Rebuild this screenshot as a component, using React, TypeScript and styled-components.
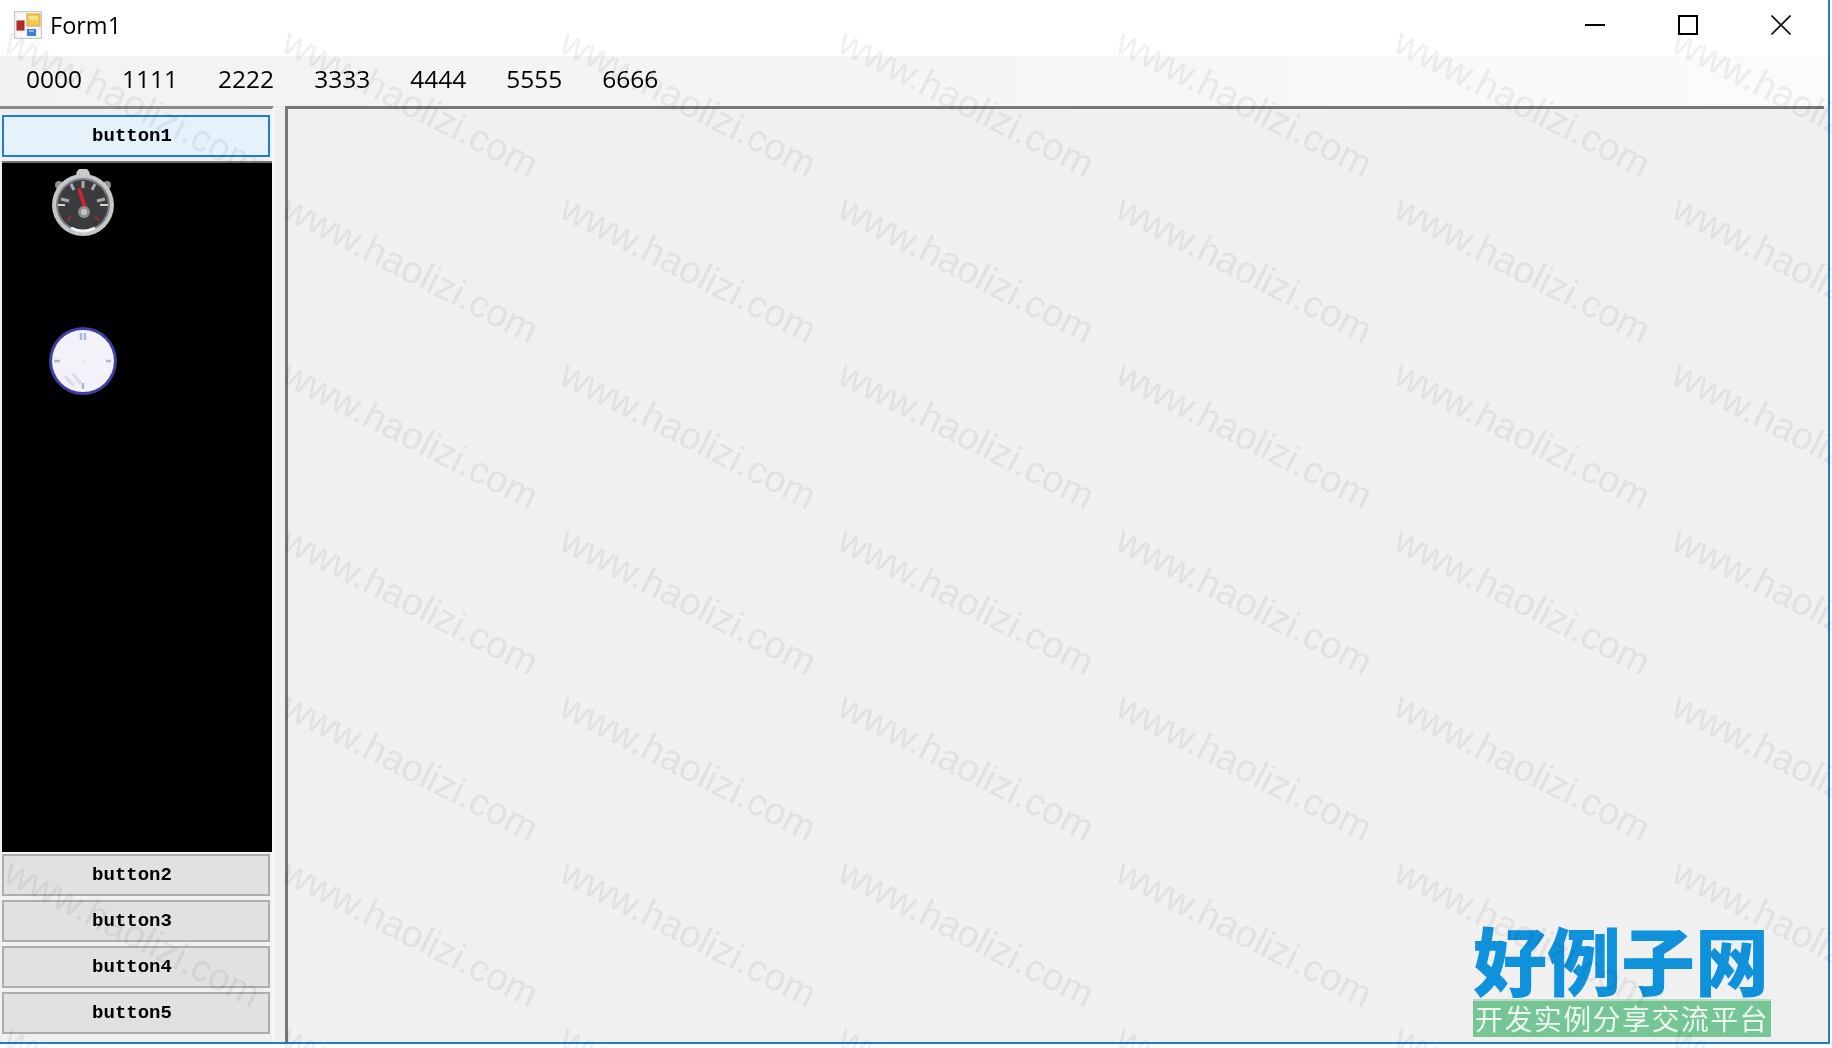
import * as React from "react";
import styled, { createGlobalStyle } from "styled-components";

const MENU_ITEMS = ["0000", "1111", "2222", "3333", "4444", "5555", "6666"];
const LOWER_BUTTONS = ["button2", "button3", "button4", "button5"];
const WATERMARK_COUNT = 7 * 7;

const GlobalStyle = createGlobalStyle`
  html, body {
    margin: 0;
    padding: 0;
    background: #fff;
  }
  * {
    box-sizing: border-box;
  }
`;

const Page = styled.div`
  position: relative;
  width: 1832px;
  height: 1048px;
  background: #fff;
  overflow: hidden;
`;

const Window = styled.div`
  width: 1830px;
  height: 1044px;
  display: grid;
  grid-template-rows: 56px 50px 1fr;
  border-right: 2px solid #1a7fd0;
  border-bottom: 2px solid #1a7fd0;
  background: #f0f0f0;
`;

const TitleBar = styled.header`
  display: flex;
  align-items: center;
  padding: 0 37px 6px 14px;
  background: #fff;
`;

const TitleText = styled.span`
  margin-left: 8px;
  flex: 1;
  font-family: "Open Sans", sans-serif;
  font-size: 23.5px;
  color: #000;
`;

const WindowControls = styled.div`
  display: flex;
  gap: 73px;
`;

const MenuBar = styled.nav`
  display: flex;
  align-items: center;
  padding: 0 0 4px 6px;
  background: linear-gradient(90deg, #f2f2f2 0%, #f5f5f5 50%, #fbfbfb 100%);
`;

const MenuItem = styled.span`
  padding: 0 20px;
  font-family: "Open Sans", sans-serif;
  font-size: 24.5px;
  line-height: 34px;
  color: #000;
`;

const Body = styled.div`
  display: grid;
  grid-template-columns: 274px 1fr;
  column-gap: 10px;
  min-height: 0;
  padding-right: 4px;
`;

const LeftPanel = styled.aside`
  display: flex;
  flex-direction: column;
  padding: 6px 2px 4px 2px;
  border-top: 3px solid #8a8a8a;
  border-right: 2px solid #f7f7f7;
  background: #f0f0f0;
`;

const NavButton = styled.button<{ $active?: boolean }>`
  flex: none;
  width: 268px;
  height: 42px;
  margin-bottom: 4px;
  padding: 0 8px 0 0;
  border: 2px solid ${({ $active }) => ($active ? "#1a7fd0" : "#adadad")};
  border-radius: 0;
  background: ${({ $active }) => ($active ? "#e5f1fb" : "#e1e1e1")};
  font-family: "Liberation Mono", monospace;
  font-size: 19px;
  font-weight: 700;
  color: #000;
`;

const GaugeList = styled.div`
  flex: 1;
  display: flex;
  flex-direction: column;
  width: 270px;
  margin-bottom: 2px;
  padding: 6px 0 0 47px;
  border-top: 2px solid #6f7378;
  background: #000;
`;

const GaugeImage = styled.svg`
  display: block;
  filter: blur(0.6px);
`;

const ClockImage = styled(GaugeImage)`
  margin-top: 89px;
  margin-left: -1px;
`;

const MainPanel = styled.main`
  display: flex;
  flex-direction: column;
  align-items: flex-end;
  justify-content: flex-end;
  margin-left: 1px;
  padding: 0 53px 5px 0;
  border-top: 3px solid #777;
  border-left: 3px solid #777;
  background: #f0f0f0;
`;

const LogoTitle = styled.div`
  width: 298px;
  font-family: "Noto Sans CJK SC", sans-serif;
  font-size: 74px;
  font-weight: 900;
  line-height: 76px;
  letter-spacing: 0;
  white-space: nowrap;
  color: #0f91dc;
`;

const LogoSlogan = styled.div`
  width: 298px;
  height: 38px;
  margin-top: 3px;
  border-top: 2px solid #b6dcc4;
  background: #76c594;
  font-family: "Noto Sans CJK SC", sans-serif;
  font-size: 28px;
  line-height: 35px;
  letter-spacing: 1.4px;
  text-align: center;
  white-space: nowrap;
  color: #eef8f1;
`;

const WatermarkLayer = styled.div`
  position: absolute;
  inset: 0;
  display: grid;
  grid-template-columns: repeat(7, 278px);
  grid-auto-rows: 166px;
  padding: 18px 0 0 12px;
  overflow: hidden;
  pointer-events: none;
  mix-blend-mode: multiply;
`;

const WatermarkText = styled.span`
  display: block;
  width: 0;
  height: 0;
  white-space: nowrap;
  transform: rotate(27deg);
  transform-origin: 0 12px;
  font-family: "Liberation Sans", sans-serif;
  font-size: 38px;
  line-height: 44px;
  color: #f0f0f0;
`;

const FormIcon = () => (
  <svg width="28" height="28" viewBox="0 0 28 28">
    <rect x="0.5" y="0.5" width="27" height="27" fill="#f1f1f1" stroke="#c6c6c6" />
    <rect x="3" y="3" width="4" height="5" fill="#fff" />
    <rect x="8" y="3" width="4" height="5" fill="#fff" />
    <rect x="3" y="22" width="4" height="3" fill="#fff" />
    <rect x="8" y="22" width="4" height="3" fill="#fff" />
    <rect x="23" y="19" width="3" height="6" fill="#fff" />
    <rect x="13" y="3" width="13" height="12" fill="#f6c84a" stroke="#d9a441" />
    <rect x="15" y="5" width="9" height="4" fill="#fbe08c" />
    <rect x="3" y="10" width="7" height="9" fill="#b92b2b" stroke="#9c2a2a" />
    <rect x="13" y="18" width="9" height="7" fill="#3f7fd8" />
    <rect x="15" y="19" width="5" height="2" fill="#8db6ee" />
  </svg>
);

const MinimizeIcon = () => (
  <svg width="20" height="20" viewBox="0 0 20 20">
    <rect x="0" y="9" width="20" height="2" fill="#000" />
  </svg>
);

const MaximizeIcon = () => (
  <svg width="20" height="20" viewBox="0 0 20 20">
    <rect x="1" y="1" width="18" height="18" fill="none" stroke="#000" strokeWidth="2" />
  </svg>
);

const CloseIcon = () => (
  <svg width="20" height="20" viewBox="0 0 20 20">
    <path d="M0.5 0.5 L19.5 19.5 M19.5 0.5 L0.5 19.5" stroke="#111" strokeWidth="1.6" />
  </svg>
);

const Gauge = () => (
  <GaugeImage width="68" height="68" viewBox="0 0 68 68">
    <circle cx="34" cy="6" r="7" fill="#c9cdd0" />
    <circle cx="10" cy="16" r="4" fill="#8d9194" />
    <circle cx="58" cy="16" r="4" fill="#8d9194" />
    <circle cx="34" cy="36" r="31" fill="#c4c8ca" />
    <circle cx="34" cy="36" r="27" fill="#7d8184" />
    <circle cx="34" cy="36" r="25" fill="#3a3b3c" />
    <path d="M12 30 L20 32 M56 30 L48 32 M22 15 L25 21 M46 15 L43 21 M34 12 L34 19" stroke="#a9adb0" strokeWidth="3" />
    <path d="M9 36 L16 36 M59 36 L51 36" stroke="#d2d4d5" strokeWidth="2" />
    <path d="M18 52 L22 47 M50 52 L46 47" stroke="#a82a2a" strokeWidth="2" />
    <path d="M28 19 L32 20 L38 38 L34 39 Z" fill="#d3202c" />
    <circle cx="35" cy="43" r="6" fill="#8c9092" />
    <circle cx="35" cy="43" r="3" fill="#c4c7c9" />
    <path d="M22 59 A27 27 0 0 0 46 59" fill="none" stroke="#f2f3f4" strokeWidth="3" />
  </GaugeImage>
);

const Clock = () => (
  <ClockImage width="70" height="70" viewBox="0 0 70 70">
    <circle cx="35" cy="35" r="34" fill="#3e3fa0" />
    <circle cx="35" cy="35" r="31" fill="#f4f2f8" />
    <path d="M33 7 V14 M37 7 V14 M35 57 V63 M6 35 H12 M58 35 H63" stroke="#a6b8dc" strokeWidth="2.5" />
    <path d="M17 50 L26 60 M25 48 L33 58" stroke="#dcdbe0" strokeWidth="3" />
    <circle cx="35" cy="35" r="1.5" fill="#e4e4ea" />
  </ClockImage>
);

export default function App() {
  return (
    <Page>
      <GlobalStyle />
      <Window>
        <TitleBar>
          <FormIcon />
          <TitleText>Form1</TitleText>
          <WindowControls>
            <MinimizeIcon />
            <MaximizeIcon />
            <CloseIcon />
          </WindowControls>
        </TitleBar>
        <MenuBar>
          {MENU_ITEMS.map((item) => (
            <MenuItem key={item}>{item}</MenuItem>
          ))}
        </MenuBar>
        <Body>
          <LeftPanel>
            <NavButton $active>button1</NavButton>
            <GaugeList>
              <Gauge />
              <Clock />
            </GaugeList>
            {LOWER_BUTTONS.map((label) => (
              <NavButton key={label}>{label}</NavButton>
            ))}
          </LeftPanel>
          <MainPanel>
            <LogoTitle>好例子网</LogoTitle>
            <LogoSlogan>开发实例分享交流平台</LogoSlogan>
          </MainPanel>
        </Body>
      </Window>
      <WatermarkLayer>
        {Array.from({ length: WATERMARK_COUNT }, (_, i) => (
          <div key={i}>
            <WatermarkText>www.haolizi.com</WatermarkText>
          </div>
        ))}
      </WatermarkLayer>
    </Page>
  );
}
